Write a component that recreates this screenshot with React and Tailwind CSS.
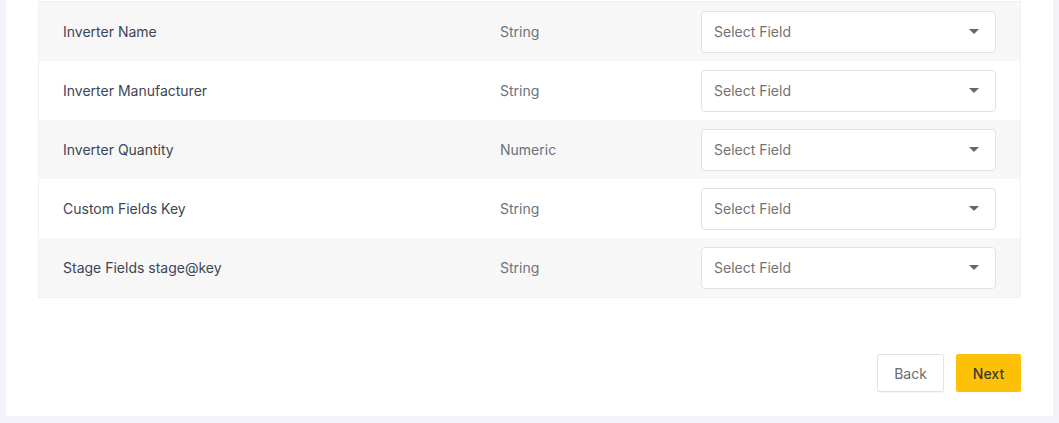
const rows = [
  { label: "Inverter Name", type: "String" },
  { label: "Inverter Manufacturer", type: "String" },
  { label: "Inverter Quantity", type: "Numeric" },
  { label: "Custom Fields Key", type: "String" },
  { label: "Stage Fields stage@key", type: "String" },
];

function Caret() {
  return (
    <svg width="10" height="5" viewBox="0 0 10 5" className="shrink-0">
      <path d="M0 0 L10 0 L5 5 Z" fill="#666666" />
    </svg>
  );
}

export default function App() {
  return (
    <div
      className="w-full h-[423px] bg-[#f3f3f9] pl-[6px] pr-[6px]"
      style={{ fontFamily: "Inter, 'Noto Sans', sans-serif" }}
    >
      <div className="bg-white h-[416px] pt-[1px] px-[32px] flex flex-col">
        {/* Mapping table */}
        <div className="border border-[#f2f2f2]">
          {rows.map((r, i) => (
            <div
              key={r.label}
              className={`flex items-center h-[59px] px-[24px] ${i % 2 === 0 ? "bg-[#f7f7f7]" : "bg-white"}`}
            >
              <div className="w-[437px] text-[14px] text-[#3c4656]">{r.label}</div>
              <div className="w-[201px] text-[14px] text-[#6b7280]">{r.type}</div>
              <div className="w-[295px] h-[42px] bg-white border border-[#e2e2e2] rounded-[4px] flex items-center justify-between pl-[12px] pr-[16px]">
                <span className="text-[14px] text-[#737373]">Select Field</span>
                <Caret />
              </div>
            </div>
          ))}
        </div>

        {/* Footer actions */}
        <div className="flex justify-end gap-[12px] mt-[56px]">
          <button className="w-[67px] h-[38px] border border-[#e2e2e2] bg-white rounded-[2px] text-[14px] text-[#6b6b6b] shadow-[0_1px_1px_rgba(0,0,0,0.04)]">
            Back
          </button>
          <button className="w-[65px] h-[38px] bg-[#ffc107] rounded-[2px] text-[14px] font-medium text-[#3a3a2a]">
            Next
          </button>
        </div>
      </div>
    </div>
  );
}
